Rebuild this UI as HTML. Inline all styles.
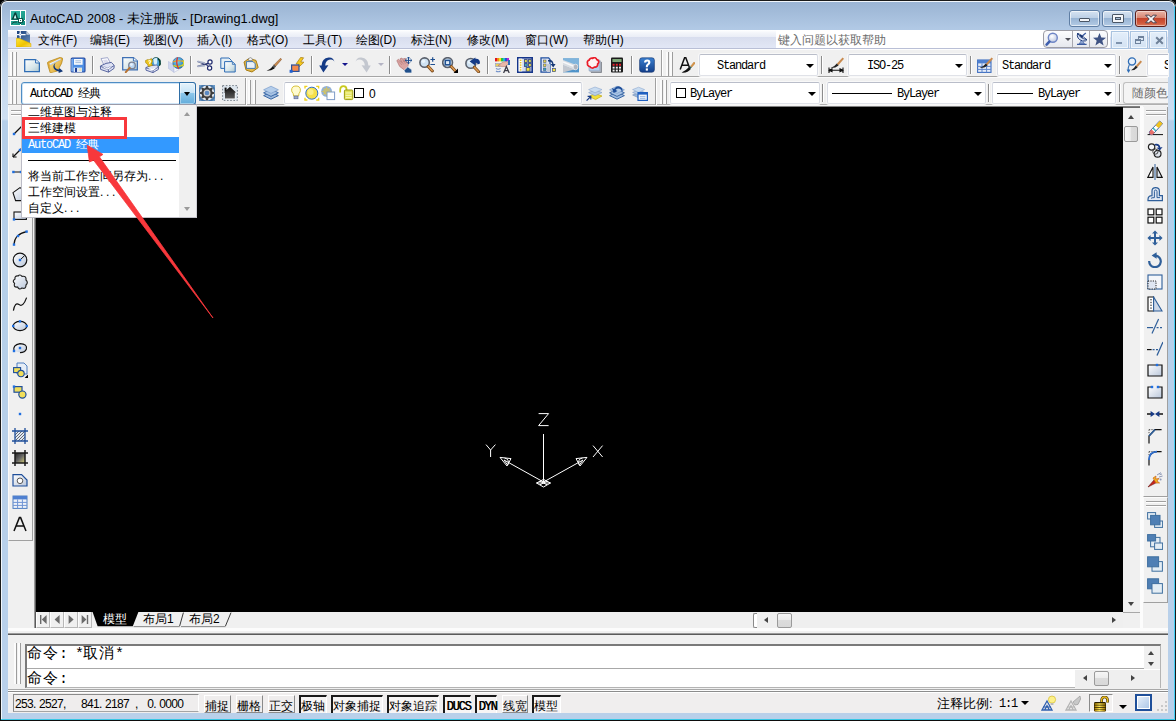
<!DOCTYPE html>
<html lang="zh">
<head>
<meta charset="utf-8">
<title>AutoCAD 2008</title>
<style>
*{box-sizing:border-box;margin:0;padding:0}
html,body{width:1176px;height:721px;overflow:hidden;background:#000}
body{font-family:"Liberation Sans",sans-serif;font-size:12px;color:#000;position:relative}
#win{position:absolute;left:0;top:0;width:1176px;height:721px;overflow:hidden;border-radius:7px 7px 0 0;
 background:linear-gradient(#9ab4d4 0,#a1bad8 10px,#b1c9e5 29px,#c3d7ee 70px,#cfdff1 119px,#b5cfea 121px,#b7d0ea 400px,#b9d0ea 100%)}
#win div,#win span,#win svg,#win i{position:absolute;display:block}
#win span{white-space:nowrap;line-height:16px}
.mn{font-size:12px;top:32px}
.ss{font-family:"Liberation Mono",monospace;font-size:12px;letter-spacing:-1.2px}
.cj{font-family:"Liberation Sans",sans-serif;font-size:12px}
.combo{background:#fff;border:1px solid #d9dce4;border-top-color:#b9bdc9;border-bottom-color:#e0e2e8;border-radius:2px;box-shadow:0 0 0 1px #f8f8f8}
.arr{width:0;height:0;border-left:4px solid transparent;border-right:4px solid transparent;border-top:4px solid #000}
.vsep{width:1px;background:#8c8c8c}
.grip{width:3px;border-left:2px solid #fbfbfb;border-right:1px solid #9c9c9c}
.dt{font-weight:normal;letter-spacing:2.7px}
.cm{font-size:15px;line-height:18px;letter-spacing:1px}
.hw{font-weight:normal;font-family:"Liberation Mono",monospace;letter-spacing:-1px}
.dg{font-weight:normal;letter-spacing:-.67px}
.pn{font-weight:normal;letter-spacing:2.67px}
</style>
</head>
<body>
<div id="win">
<div style="left:0px;top:0px;width:1176px;height:721px;border-radius:7px 7px 0 0;box-shadow:inset 0 0 0 1px #1a1a1a,inset 0 0 0 2px #f1f6fb"></div>
<div style="left:1px;top:719px;width:1174px;height:1px;background:#38c6e4"></div>
<div style="left:1174px;top:6px;width:1px;height:714px;background:#44d0f6"></div>
<div style="left:0px;top:720px;width:1176px;height:1px;background:#0c0c0c"></div>
<svg style="left:10px;top:10px;" width="16" height="16" viewBox="0 0 16 16"><defs><linearGradient id="ga" x1="0" y1="0" x2="1" y2="1"><stop offset="0" stop-color="#34bca8"/><stop offset="1" stop-color="#128a7a"/></linearGradient></defs><rect x="0" y="0" width="16" height="16" fill="#fff"/><rect x="1" y="1" width="14" height="14" fill="url(#ga)"/><path d="M2 9 L4.6 2.4 L6 2.2 L8.2 9 L6.6 9 L5.2 4.4 L3.6 9 Z" fill="#0b3f38"/><path d="M3.8 8.6 L5.2 4.8 L6.4 8.6 Z" fill="#e8f8f5"/><path d="M1.6 9.2 H8.6" stroke="#0b3f38" stroke-width=".9"/><path d="M10.5 1 V15 M1 10.5 H15" stroke="#fff" stroke-width="1" shape-rendering="crispEdges"/><rect x="8.5" y="8.5" width="4" height="4" fill="#fff" stroke="#0e5a50" stroke-width="1" shape-rendering="crispEdges"/><rect x="10" y="10" width="1" height="1" fill="#0e5a50"/><path d="M1.6 13.8 L4 12.2 L7 12" stroke="#0b3f38" stroke-width=".9" fill="none"/><rect x="10" y="13" width="1" height="1" fill="#0b3f38"/><rect x="13" y="10" width="1" height="1" fill="#0b3f38"/></svg>
<span style="left:30px;top:10px;font-size:12.8px;line-height:18px">AutoCAD 2008 - 未注册版 - [Drawing1.dwg]</span>
<div style="left:1069px;top:10px;width:31px;height:17px;background:linear-gradient(#d6e3f1 0,#bdd0e6 45%,#98b4d4 50%,#b3cbe5 100%);border:1px solid #5f7ea4;border-radius:3px;box-shadow:inset 0 0 0 1px rgba(255,255,255,.62)"><div style="left:9px;top:7px;width:11px;height:4px;background:#f4f6f9;border:1px solid #4a5666;border-radius:1px"></div></div><div style="left:1102px;top:10px;width:31px;height:17px;background:linear-gradient(#d6e3f1 0,#bdd0e6 45%,#98b4d4 50%,#b3cbe5 100%);border:1px solid #5f7ea4;border-radius:3px;box-shadow:inset 0 0 0 1px rgba(255,255,255,.62)"><div style="left:9px;top:3px;width:12px;height:9px;background:#f4f6f9;border:1px solid #4a5666;border-radius:1px"></div><div style="left:12px;top:6px;width:6px;height:3px;background:#a9bfd9;border:1px solid #4a5666"></div></div><div style="left:1135px;top:10px;width:32px;height:17px;background:linear-gradient(#e9b6a8 0,#d98774 45%,#c4452c 50%,#d0583c 80%,#dd7a5c 100%);border:1px solid #5b1e1a;border-radius:3px;box-shadow:inset 0 0 0 1px rgba(255,255,255,.45)"><svg style="left:8px;top:2.5px;" width="14" height="10" viewBox="0 0 14 10"><path d="M1.6 1.2 L4.8 1.2 L7 3.2 L9.2 1.2 L12.4 1.2 L8.8 5 L12.4 8.8 L9.2 8.8 L7 6.8 L4.8 8.8 L1.6 8.8 L5.2 5 Z" fill="#f6f6f8" stroke="#4a4450" stroke-width="1" stroke-linejoin="round"/></svg></div>
<div style="left:8px;top:30px;width:1160px;height:19px;background:linear-gradient(#ffffff 0,#f3f5fa 3px,#eaedf6 7px,#d8ddee 7px,#dde2f1 12px,#e2e7f6 18px,#b9bfd6 18px,#b9bfd6 19px)"></div>
<svg style="left:16px;top:31px;" width="16" height="16" viewBox="0 0 16 16"><defs><linearGradient id="gd" x1="0" y1="0" x2="1" y2="1"><stop offset="0" stop-color="#173f7c"/><stop offset="1" stop-color="#6a8db8"/></linearGradient><linearGradient id="gy" x1="0" y1="0" x2="1" y2="1"><stop offset="0" stop-color="#ffe63a"/><stop offset=".6" stop-color="#f0c400"/><stop offset="1" stop-color="#f8dc6a"/></linearGradient></defs><path d="M1 0 H10.4 L14 3.8 V13 H1 Z" fill="url(#gd)"/><path d="M10.4 0 L14 3.8 H10.4 Z" fill="#c4ccd8"/><path d="M1 3.6 H9.6 M4.2 0 V7.6" stroke="#fff" stroke-width="1.1"/><circle cx="4.2" cy="3.6" r="1.3" fill="#fff"/><circle cx="4.2" cy="3.6" r=".5" fill="#3f6fae"/><path d="M.2 7.3 H3 L15 12.6 V16 H.2 Z" fill="url(#gy)" stroke="#d8a800" stroke-width=".5"/></svg>
<span class="mn" style="left:38px;top:32px;">文件(F)</span>
<span class="mn" style="left:90px;top:32px;">编辑(E)</span>
<span class="mn" style="left:143px;top:32px;">视图(V)</span>
<span class="mn" style="left:197px;top:32px;">插入(I)</span>
<span class="mn" style="left:247px;top:32px;">格式(O)</span>
<span class="mn" style="left:303px;top:32px;">工具(T)</span>
<span class="mn" style="left:355.5px;top:32px;">绘图(D)</span>
<span class="mn" style="left:411px;top:32px;">标注(N)</span>
<span class="mn" style="left:467px;top:32px;">修改(M)</span>
<span class="mn" style="left:525px;top:32px;">窗口(W)</span>
<span class="mn" style="left:583px;top:32px;">帮助(H)</span>
<div style="left:776px;top:30px;width:334px;height:18px;background:#fff"></div>
<span style="left:778px;top:32px;font-size:12px;color:#6c6c6c">键入问题以获取帮助</span>
<div style="left:1043px;top:30px;width:65px;height:18px;background:linear-gradient(#fdfdfe,#f1f2f6 50%,#e6e8ee);border:1px solid #9c9ca4;border-radius:4px"></div><div style="left:1072px;top:31px;width:1px;height:16px;background:#a8a8b0"></div><div style="left:1089px;top:31px;width:1px;height:16px;background:#a8a8b0"></div><svg style="left:1044px;top:32px;" width="16" height="15" viewBox="0 0 16 15"><defs><radialGradient id="gm" cx=".4" cy=".35" r=".7"><stop offset="0" stop-color="#fff"/><stop offset="1" stop-color="#b9c4e0"/></radialGradient></defs><circle cx="8.8" cy="5.8" r="4.5" fill="url(#gm)" stroke="#6f86c6" stroke-width="1.4"/><path d="M5.4 9.6 L2.6 12.6" stroke="#3f5fae" stroke-width="2.6" stroke-linecap="round"/></svg><div style="left:1065px;top:38px;width:0px;height:0px;border-left:3px solid transparent;border-right:3px solid transparent;border-top:3px solid #505058"></div><svg style="left:1075px;top:32px;" width="14" height="14" viewBox="0 0 14 14"><path d="M2.6 1 Q1 7 7.6 9 Q11.6 9.4 12 7.6 Q5 6.6 2.6 1 Z" fill="#dfe6f6" stroke="#24407e" stroke-width="1"/><path d="M3 1.4 Q6 2.4 11.6 7.4" stroke="#24407e" stroke-width=".8" fill="none"/><path d="M6.2 5 L10.8 1" stroke="#3a5aa0" stroke-width="1.3"/><path d="M4.6 3.6 Q6.6 3 7.6 5.6" fill="none" stroke="#16306a" stroke-width="1.6"/><path d="M6 9 L4 12 H9.6 L7.6 9" fill="#8fa4d0" stroke="#3a5aa0" stroke-width=".6"/><path d="M2 12.4 H11.6" stroke="#3a5aa0" stroke-width="1.2"/></svg><svg style="left:1093px;top:33px;" width="14" height="13" viewBox="0 0 14 13"><path d="M6.5 0 L8.3 4.6 L13 4.8 L9.3 7.8 L10.6 12.4 L6.5 9.8 L2.4 12.4 L3.7 7.8 L0 4.8 L4.7 4.6 Z" fill="#3f5384"/></svg>
<div style="left:1111px;top:31px;width:18px;height:18px;background:linear-gradient(#e3eefa,#d3e2f3);border:1px solid #a9c3e0;box-shadow:inset 0 0 0 1px #eef5fc"><div style="left:4px;top:10px;width:6px;height:2px;background:#7f93ad"></div></div><div style="left:1130px;top:31px;width:18px;height:18px;background:linear-gradient(#e3eefa,#d3e2f3);border:1px solid #a9c3e0;box-shadow:inset 0 0 0 1px #eef5fc"><div style="left:7px;top:4px;width:6px;height:5px;border:1px solid #6f839d;border-top-width:2px"></div><div style="left:4px;top:7px;width:6px;height:5px;border:1px solid #6f839d;border-top-width:2px;background:#dbe8f6"></div></div><div style="left:1149px;top:31px;width:18px;height:18px;background:linear-gradient(#e3eefa,#d3e2f3);border:1px solid #a9c3e0;box-shadow:inset 0 0 0 1px #eef5fc"><svg style="left:4.5px;top:4px;" width="9" height="9" viewBox="0 0 9 9"><path d="M1.2 1.2 L7.8 7.8 M7.8 1.2 L1.2 7.8" stroke="#6f8198" stroke-width="2"/></svg></div>
<div style="left:8px;top:49px;width:1160px;height:58px;background:#f0f0f0"></div>
<div style="left:8px;top:76px;width:1160px;height:1px;background:#a5a5a5"></div>
<div style="left:8px;top:77px;width:1160px;height:1px;background:#fbfbfb"></div>
<div style="left:8px;top:104px;width:1160px;height:1px;background:#b0b0b0"></div>
<div style="left:8px;top:105px;width:1160px;height:1px;background:#f4f4f4"></div>
<div style="left:8px;top:49px;width:1160px;height:1px;background:#fdfdfd"></div><div class="grip" style="left:10px;top:52px;width:3px;height:24px;"></div><div class="grip" style="left:14px;top:52px;width:3px;height:24px;"></div><svg style="left:24px;top:57px;" width="16" height="16" viewBox="0 0 16 16"><defs><linearGradient id="gp" x1="0" y1="0" x2="1" y2="1"><stop offset="0" stop-color="#fff"/><stop offset=".6" stop-color="#d8e6ea"/><stop offset="1" stop-color="#a9c4cf"/></linearGradient></defs><path d="M.7 2.6 H11.6 L15.4 6 V14.6 H.7 Z" fill="url(#gp)" stroke="#2f6db5" stroke-width="1.3"/><path d="M11.6 2.6 V6 H15.4" fill="#f4f8fb" stroke="#2f6db5" stroke-width="1"/></svg><svg style="left:47px;top:57px;" width="16" height="16" viewBox="0 0 16 16"><defs><linearGradient id="gf" x1="0" y1="0" x2="1" y2="1"><stop offset="0" stop-color="#f8e08a"/><stop offset="1" stop-color="#dca028"/></linearGradient></defs><path d="M.4 5.6 L2.6 4.2 L13.4 .3 L15.8 1.4 L14.6 6.4 L10.4 14 L3.2 15.8 L1.4 10 Z" fill="#e4b040" stroke="#b08214" stroke-width=".7"/><path d="M2.4 6.4 L13.2 1.4 L14.2 2.4 L3.2 8.4 Z" fill="#eef4fb"/><path d="M3 8 L14 2.4" stroke="#9ab4d8" stroke-width=".7"/><path d="M3 8.6 L14.6 2.8 L10.4 13.8 L3.6 15.4 Z" fill="url(#gf)"/><path d="M8.6 6 Q6.6 8 8 10.4 Q9.4 12.4 12 12.6 L12.4 11 L16 14.2 L11.6 16 L11.8 14.4 Q8 14 6.6 11 Q5.6 8 8.6 6 Z" fill="#123878"/></svg><svg style="left:70px;top:57px;" width="16" height="16" viewBox="0 0 16 16"><rect x="1.2" y="1" width="13.8" height="14" rx="1" fill="#4f8fe4" stroke="#27489c" stroke-width="1.1"/><path d="M2 2 V14.4" stroke="#9cc4f4" stroke-width="1"/><rect x="4" y="2" width="8.6" height="5.8" fill="#f6f9fc"/><path d="M5.4 3.8 H11 M5.4 5.6 H11" stroke="#9fb8d8" stroke-width=".9"/><rect x="3.6" y="10.6" width="8.4" height="4.4" fill="#dfe8f2"/><rect x="5" y="11" width="2" height="4" fill="#1f3f96"/><rect x="9" y="11" width="2.4" height="3" fill="#e8e4c0"/></svg><svg style="left:99px;top:57px;" width="16" height="16" viewBox="0 0 16 16"><path d="M2 1.6 L8.6 .6 L11.4 6 L5 8 Z" fill="#fbfbfe" stroke="#8e96c0" stroke-width=".8"/><path d="M4 3 L8 2.4 L9.6 5.4 L5.6 6.6 Z" fill="#dcdcec"/><path d="M1.4 9 L7 6.4 L12.4 5.4 L15.2 8.4 L15 11.4 L9.6 15.2 L1.6 12.4 Z" fill="#dfe3f4" stroke="#4a5896" stroke-width=".9"/><path d="M1.6 9.4 L9.4 12.2 L15 8.6 M9.4 12.2 V15" stroke="#4a5896" stroke-width=".9" fill="none"/><path d="M3.6 10.8 L9 12.8 L12.6 10.6 L10.6 9.8 L8.8 11 L5.4 9.8 Z" fill="#fff" stroke="#6a76a8" stroke-width=".5"/></svg><svg style="left:122px;top:57px;" width="16" height="16" viewBox="0 0 16 16"><defs><linearGradient id="gp" x1="0" y1="0" x2="1" y2="1"><stop offset="0" stop-color="#fff"/><stop offset=".6" stop-color="#d8e6ea"/><stop offset="1" stop-color="#a9c4cf"/></linearGradient></defs><path d="M.7 .7 H11.4 L15.4 4 V12.8 H.7 Z" fill="url(#gp)" stroke="#3f70b4" stroke-width="1.3"/><path d="M11.4 .7 V4 H15.4" fill="#f4f8fb" stroke="#3f70b4" stroke-width="1"/><circle cx="10" cy="8.4" r="3.3" fill="#b9d6f2" stroke="#7c8294" stroke-width="1.3"/><circle cx="9.4" cy="7.6" r="1.4" fill="#e8f2fc"/><path d="M7.6 10.8 L3.8 15.2" stroke="#b87434" stroke-width="2" stroke-linecap="round"/></svg><svg style="left:145px;top:57px;" width="16" height="16" viewBox="0 0 16 16"><circle cx="11" cy="5.4" r="4.8" fill="#4fa4dc" stroke="#1a4a3a" stroke-width=".8"/><path d="M8.4 2 Q10.6 .8 12 1.2 Q13 5 11 9.6 Q8.6 8 8.4 2 Z" fill="#d8f0f8"/><path d="M13 1.6 Q16 4.6 14.4 8.6" stroke="#0f3f2a" stroke-width="1.4" fill="none"/><path d="M.8 10.6 L5.6 8.6 L11.4 8 L13.6 10 L13.4 12.4 L8 15.6 L1 13.2 Z" fill="#dfe3f4" stroke="#4a5896" stroke-width=".9"/><path d="M1 10.8 L8 13.2 L13.4 10.2 M8 13.2 V15.4" stroke="#4a5896" stroke-width=".8" fill="none"/><path d="M3.4 12 L7.6 13.4 L10.8 11.6 L9.4 11 L7.6 12 L5 11.2 Z" fill="#fff"/><path d="M.4 3.6 L3 2.4 L4 3 L6.4 1.4 L7.6 4 L6.6 6.4 L7.4 8.4 L3.4 9.6 L2.4 7 L.8 6 Z" fill="#ecc41c" stroke="#a8860a" stroke-width=".6"/><path d="M3.4 4.4 Q4.6 3 5.6 4.2 Q5.8 5.4 4.6 5.8 L4.8 7" stroke="#fff8d0" stroke-width="1.1" fill="none"/></svg><svg style="left:168px;top:57px;" width="16" height="16" viewBox="0 0 16 16"><path d="M.4 4.4 L6 8 V15.4 L.4 11.4 Z" fill="#cfd6ee" stroke="#b0b8d8" stroke-width=".5"/><path d="M6 8 L11 6 V12.6 L6 15.4 Z" fill="#f2f4fb" stroke="#b0b8d8" stroke-width=".5"/><defs><radialGradient id="gg" cx=".4" cy=".35" r=".7"><stop offset="0" stop-color="#7fd0ec"/><stop offset="1" stop-color="#1f78b8"/></radialGradient></defs><circle cx="10.4" cy="6" r="5.6" fill="url(#gg)" stroke="#1d5aa0" stroke-width=".6"/><path d="M5 5 Q10 2.6 15.6 4.6" stroke="#f0a020" stroke-width="1.1" fill="none"/><path d="M5.4 8.4 Q10.6 11 15.6 7.6" stroke="#d8d020" stroke-width="1.2" fill="none"/><path d="M15 3 Q16.4 6 14.6 9.6" stroke="#e8e020" stroke-width="1" fill="none"/><path d="M9.6 .6 Q7.4 6 10.6 11.6" stroke="#e0342a" stroke-width="1.3" fill="none"/></svg><svg style="left:197px;top:57px;" width="16" height="16" viewBox="0 0 16 16"><path d="M.6 4.4 L11 8.6 M.6 9.4 L11 6.4" stroke="#2a3570" stroke-width="1.1"/><path d="M.6 4.4 L8 6 M.6 9.4 L8 8.6" stroke="#a8b0c8" stroke-width="1.6"/><circle cx="13" cy="5" r="2.1" fill="#fff" stroke="#1f2a6e" stroke-width="1.2"/><circle cx="12.6" cy="11" r="2.1" fill="#fff" stroke="#1f2a6e" stroke-width="1.2"/></svg><svg style="left:220px;top:57px;" width="16" height="16" viewBox="0 0 16 16"><defs><linearGradient id="gp" x1="0" y1="0" x2="1" y2="1"><stop offset="0" stop-color="#fff"/><stop offset=".6" stop-color="#d8e6ea"/><stop offset="1" stop-color="#a9c4cf"/></linearGradient></defs><path d="M.8 1 H9 L11.4 3.4 V11.4 H.8 Z" fill="#e4eef4" stroke="#2f6db5" stroke-width="1"/><path d="M4.6 4.6 H12.4 L15.2 7.4 V15 H4.6 Z" fill="url(#gp)" stroke="#2f6db5" stroke-width="1"/><path d="M12.4 4.6 V7.4 H15.2" fill="none" stroke="#2f6db5" stroke-width=".8"/></svg><svg style="left:243px;top:57px;" width="16" height="16" viewBox="0 0 16 16"><path d="M1 5 L6 1.4 L13 3.4 L15.2 10.6 L9 15 L3 13 Z" fill="#e3b94a" stroke="#a87d14" stroke-width="1"/><path d="M5.4 1.6 L7.6 .6 L9.6 2 L9 3.6 H5.6 Z" fill="#f2f2f2" stroke="#7a7a7a" stroke-width=".7"/><path d="M3.4 4.6 H10 L12.2 6.8 V11.4 H3.4 Z" fill="#eaf1f6" stroke="#2f6db5" stroke-width=".9"/></svg><svg style="left:266px;top:57px;" width="16" height="16" viewBox="0 0 16 16"><path d="M14.6 1.2 L15.6 2.4 L9.4 9.6 L7.6 8.2 Z" fill="#c98a4e" stroke="#7a4a22" stroke-width=".5"/><path d="M8 7.6 L10 9.6 L8 11.6 L6 10 Z" fill="#555"/><path d="M6.6 9.4 L8.6 11.4 Q5 14 .6 13.8 Q4 12.6 6.6 9.4 Z" fill="#111"/></svg><svg style="left:289px;top:57px;" width="16" height="16" viewBox="0 0 16 16"><path d="M11.6 .4 L14.6 .8 L11.8 5 L15 5.2 L7.4 12.4 L9.6 7.2 L7 7 Z" fill="#f4c81e" stroke="#a87d14" stroke-width=".7"/><rect x="2.6" y="8" width="7.4" height="6.4" fill="#f58a4c" stroke="#2a4f9a" stroke-width="1.2"/><rect x=".6" y="12.8" width="3" height="3" fill="#1f5fd0"/></svg><svg style="left:319px;top:57px;" width="16" height="16" viewBox="0 0 16 16"><path d="M15.6 5.4 Q14.4 1.6 10 2.8 Q6.6 4 6.2 8.4 L9.4 8.2 L4.4 15.6 L.2 8.4 L2.6 8.5 Q2.8 1.6 9.6 .6 Q14.6 .2 15.6 5.4 Z" fill="#143a86"/></svg><svg style="left:355px;top:57px;" width="16" height="16" viewBox="0 0 16 16"><g transform="translate(16 0) scale(-1 1)"><path d="M15.6 5.4 Q14.4 1.6 10 2.8 Q6.6 4 6.2 8.4 L9.4 8.2 L4.4 15.6 L.2 8.4 L2.6 8.5 Q2.8 1.6 9.6 .6 Q14.6 .2 15.6 5.4 Z" fill="#c3c7cf"/></g></svg><svg style="left:396px;top:57px;" width="16" height="16" viewBox="0 0 16 16"><path d="M.8 3.6 L2.6 2.2 L5.6 5.4 L4 1.8 L6 1 L8.2 5 L7.6 1.6 L9.6 1.4 L10.6 6 L11.6 4.8 L12.8 5.6 L11.6 10.4 L8.6 13.2 L3.6 9.4 Z" fill="#dba5a2" stroke="#a86a6a" stroke-width=".6" stroke-linejoin="round"/><path d="M2.6 4 L6 8 M5 3.4 L7.6 7.4 M8 3 L9.4 7" stroke="#b87c7c" stroke-width=".6"/><path d="M8 13.4 L11.8 9.8 L15.8 12.8 V16 H9.4 Z" fill="#1f4f8a" stroke="#f4f6fa" stroke-width=".7"/><path d="M12.5 0 V6.8 M9.1 3.4 H15.9" stroke="#1f4f90" stroke-width="1"/><path d="M11.2 1.4 L12.5 0 L13.8 1.4 M11.2 5.4 L12.5 6.8 L13.8 5.4 M10.5 2.1 L9.1 3.4 L10.5 4.7 M14.5 2.1 L15.9 3.4 L14.5 4.7" stroke="#1f4f90" stroke-width="1" fill="none"/></svg><svg style="left:419px;top:57px;" width="16" height="16" viewBox="0 0 16 16"><circle cx="5.6" cy="5.6" r="4.7" fill="#cfe2f2" stroke="#5a606c" stroke-width="1.6"/><circle cx="4.3999999999999995" cy="4.199999999999999" r="1.8" fill="#eaf4fb"/><path d="M9.2 9.399999999999999 L13.399999999999999 14.0" stroke="#7a4a1c" stroke-width="3" stroke-linecap="round"/><path d="M9.399999999999999 9.6 L13.2 13.799999999999999" stroke="#dc9a52" stroke-width="1.5" stroke-linecap="round"/><path d="M11.4 2.5 H16 M13.7 .2 V4.8 M11.4 7.5 H16" stroke="#1f4f90" stroke-width="1.2"/></svg><svg style="left:442px;top:57px;" width="16" height="16" viewBox="0 0 16 16"><circle cx="5.6" cy="5.6" r="4.9" fill="#cfe2f2" stroke="#5a606c" stroke-width="1.6"/><circle cx="4.3999999999999995" cy="4.199999999999999" r="1.8" fill="#eaf4fb"/><path d="M9.2 9.399999999999999 L13.399999999999999 14.0" stroke="#7a4a1c" stroke-width="3" stroke-linecap="round"/><path d="M9.399999999999999 9.6 L13.2 13.799999999999999" stroke="#dc9a52" stroke-width="1.5" stroke-linecap="round"/><rect x="3.3" y="3.4" width="4.6" height="4.4" fill="#dfeaf6" stroke="#1f4f90" stroke-width="1.5"/><path d="M16 11.6 V16 H11.6 Z" fill="#000"/></svg><svg style="left:465px;top:57px;" width="16" height="16" viewBox="0 0 16 16"><circle cx="5.8" cy="6.4" r="4.9" fill="#cfe2f2" stroke="#5a606c" stroke-width="1.6"/><circle cx="4.6" cy="5.0" r="1.8" fill="#eaf4fb"/><path d="M9.4 10.2 L13.6 14.8" stroke="#7a4a1c" stroke-width="3" stroke-linecap="round"/><path d="M9.6 10.4 L13.399999999999999 14.6" stroke="#dc9a52" stroke-width="1.5" stroke-linecap="round"/><path d="M15 6.4 Q15 1.2 10.4 1.8 L10.4 .4 L4.6 4.6 L10.4 8.6 L10.4 5.8 Q12.6 5.4 12.6 7.6 Z" fill="#143a86"/></svg><svg style="left:494px;top:57px;" width="16" height="16" viewBox="0 0 16 16"><rect x="1" y="1" width="2" height="3.4" fill="#e0141c"/><rect x="3" y="1" width="2" height="3.4" fill="#f08a1a"/><rect x="5" y="1" width="2" height="3.4" fill="#f4e61e"/><rect x="7" y="1" width="2" height="3.4" fill="#2fbf3a"/><rect x="9" y="1" width="2" height="3.4" fill="#1fb9d6"/><rect x="11" y="1" width="2" height="3.4" fill="#2a4fd6"/><rect x="13" y="1" width="2" height="3.4" fill="#b02ad6"/><rect x="1.6" y="6.6" width="4.6" height="3" fill="#e6cf5a" stroke="#8d9abf" stroke-width=".6"/><path d="M4 8.6 L9 5 L13 4.4 L14.6 6.4 L12 9.4 L8 9.6 Z" fill="#e9b8a8" stroke="#a86c60" stroke-width=".5"/><rect x="14" y="3" width="2" height="5" fill="#2f6db5"/><path d="M2 11.4 Q4 13 6.6 11.4 M2 14 Q4 15.6 6.6 14" stroke="#6f8fc8" stroke-width="1.1" fill="none"/><path d="M9.6 16 L12.4 9.6 L15.2 16 M10.6 13.6 H14.2" stroke="#3a3a46" stroke-width="1.3" fill="none"/></svg><svg style="left:517px;top:57px;" width="16" height="16" viewBox="0 0 16 16"><rect x=".8" y=".8" width="14.4" height="14.4" fill="#d4dcee" stroke="#16368a" stroke-width="1.6"/><rect x="1.6" y="1.6" width="3.6" height="12.8" fill="#fdfdfd"/><rect x="2.8" y="2.6" width="1.6" height="1.4" fill="#e8c51e"/><rect x="2.8" y="5" width="1.6" height="1.4" fill="#e8c51e"/><rect x="2.8" y="7.4" width="1.6" height="1.4" fill="#e8c51e"/><rect x="2.8" y="9.8" width="1.6" height="1.4" fill="#e8c51e"/><rect x="2.8" y="12.2" width="1.6" height="1.4" fill="#e8c51e"/><rect x="7.4" y="2.6" width="2.8" height="2.8" fill="#e8dc4a" stroke="#2a3c7a" stroke-width=".8"/><rect x="11.4" y="2.6" width="2.8" height="2.8" fill="#cfd65a" stroke="#2a3c7a" stroke-width=".8"/><rect x="7.4" y="6.6" width="2.8" height="2.8" fill="#3aa7b8" stroke="#2a3c7a" stroke-width=".8"/><rect x="11.4" y="6.6" width="2.8" height="2.8" fill="#e8dc4a" stroke="#2a3c7a" stroke-width=".8"/><rect x="9.2" y="10.6" width="3.8" height="3.6" fill="#f6e63a" stroke="#2a3c7a" stroke-width=".8"/></svg><svg style="left:540px;top:57px;" width="16" height="16" viewBox="0 0 16 16"><path d="M1 .8 H8.6 L10 2.4 V15.2 H1 Z" fill="#dfe6f2" stroke="#1f4fa0" stroke-width="1.3"/><rect x="7" y="7" width="3" height="8" fill="#c4cad6"/><rect x="3.4" y="3" width="2.6" height="2.6" fill="#e8d64a" stroke="#3a4a7a" stroke-width=".5"/><rect x="3.4" y="7" width="2.6" height="2.6" fill="#e8d64a" stroke="#3a4a7a" stroke-width=".5"/><rect x="3.4" y="11" width="2.6" height="2.6" fill="#3aa7b8" stroke="#3a4a7a" stroke-width=".5"/><path d="M8 3 Q12.6 2 13.6 7 L15.6 7 L13.2 10.6 L10.6 7 L12.2 7 Q11.6 4.4 8 4.6 Z" fill="#173a78"/><rect x="12.6" y="11.6" width="3" height="3" fill="#f4e23a" stroke="#3a4a7a" stroke-width=".7"/></svg><svg style="left:563px;top:57px;" width="16" height="16" viewBox="0 0 16 16"><rect x="0" y="1.4" width="16" height="14" fill="#4f93c9"/><path d="M0 1.4 L16 1.4 L16 9 L0 4 Z" fill="#7fb4dc"/><path d="M0 3 L12 7.4 Q15.6 9 13 12 L11.4 13 L0 8.4 Z" fill="#d9dde2"/><path d="M0 5 L12.4 10" stroke="#f7f8fa" stroke-width="1.6"/><path d="M0 8 L11 12.6 L0 15.4 Z" fill="#c2c7cf"/><ellipse cx="12.6" cy="10" rx="2.4" ry="2.8" fill="#aeb4be" stroke="#e8eaee" stroke-width=".8"/></svg><svg style="left:586px;top:57px;" width="16" height="16" viewBox="0 0 16 16"><path d="M5 5 H15.8 V15.8 H5 Z" fill="#70757e"/><path d="M4 4 H14.8 V14.8 H4 Z" fill="#c9ced6" stroke="#9aa0aa" stroke-width=".4"/><path d="M3 3 H13.8 V13.8 H3 Z" fill="#b4cfea" stroke="#7f93b2" stroke-width=".5"/><path d="M3.2 3.2 A2.3 2.3 0 0 1 6.6 1.4 A2.5 2.5 0 0 1 10.8 2.6 A2.4 2.4 0 0 1 11.6 7 A2.5 2.5 0 0 1 8.4 10 A2.6 2.6 0 0 1 4 9.6 A2.5 2.5 0 0 1 1.6 6.4 A2.2 2.2 0 0 1 3.2 3.2 Z" fill="#fdf2f2" stroke="#ea1c28" stroke-width="1.7" stroke-linejoin="round"/></svg><svg style="left:609px;top:57px;" width="16" height="16" viewBox="0 0 16 16"><rect x="2" y=".6" width="12" height="15" rx="1" fill="#1b1b1b"/><rect x="3.4" y="2" width="9.2" height="3" fill="#7fa878"/><rect x="3.6" y="6.8" width="2" height="1.9" fill="#e8202a"/><rect x="6.800000000000001" y="6.8" width="2" height="1.9" fill="#e8202a"/><rect x="10.0" y="6.8" width="2" height="1.9" fill="#e8202a"/><rect x="3.6" y="9.7" width="2" height="1.9" fill="#f4f4f4"/><rect x="6.800000000000001" y="9.7" width="2" height="1.9" fill="#f4f4f4"/><rect x="10.0" y="9.7" width="2" height="1.9" fill="#f4f4f4"/><rect x="3.6" y="12.6" width="2" height="1.9" fill="#f4f4f4"/><rect x="6.800000000000001" y="12.6" width="2" height="1.9" fill="#f4f4f4"/><rect x="10.0" y="12.6" width="2" height="1.9" fill="#f4f4f4"/></svg><svg style="left:639px;top:57px;" width="16" height="16" viewBox="0 0 16 16"><defs><linearGradient id="gh" x1="0" y1="0" x2="0" y2="1"><stop offset="0" stop-color="#3a7fd0"/><stop offset="1" stop-color="#133f8a"/></linearGradient></defs><rect x=".6" y=".8" width="14.8" height="14.4" rx="2.4" fill="url(#gh)" stroke="#0f2f6a" stroke-width=".6"/><path d="M5 5.6 Q5 2.6 8.2 2.6 Q11.4 2.6 11.4 5.4 Q11.4 7.2 9.6 8.2 Q8.8 8.8 8.8 10.2 H6.8 Q6.6 8 8 7 Q9.2 6.2 9.2 5.4 Q9.2 4.4 8.2 4.4 Q7.2 4.4 7.2 5.6 Z" fill="#fff"/><rect x="6.8" y="11.4" width="2.1" height="2.2" fill="#fff"/></svg><div class="vsep" style="left:92px;top:56px;width:1px;height:18px;"></div><div style="left:93px;top:56px;width:1px;height:18px;background:#fff"></div><div class="vsep" style="left:190px;top:56px;width:1px;height:18px;"></div><div style="left:191px;top:56px;width:1px;height:18px;background:#fff"></div><div class="vsep" style="left:311px;top:56px;width:1px;height:18px;"></div><div style="left:312px;top:56px;width:1px;height:18px;background:#fff"></div><div class="vsep" style="left:389px;top:56px;width:1px;height:18px;"></div><div style="left:390px;top:56px;width:1px;height:18px;background:#fff"></div><div class="vsep" style="left:487px;top:56px;width:1px;height:18px;"></div><div style="left:488px;top:56px;width:1px;height:18px;background:#fff"></div><div class="vsep" style="left:631px;top:56px;width:1px;height:18px;"></div><div style="left:632px;top:56px;width:1px;height:18px;background:#fff"></div><div style="left:342px;top:63px;width:0px;height:0px;border-left:3px solid transparent;border-right:3px solid transparent;border-top:3px solid #14148c"></div><div style="left:378px;top:63px;width:0px;height:0px;border-left:3px solid transparent;border-right:3px solid transparent;border-top:3px solid #b4b4c4"></div><div style="left:661px;top:50px;width:1px;height:26px;background:#a0a0a0"></div><div style="left:662px;top:50px;width:1px;height:26px;background:#fff"></div><div class="grip" style="left:666px;top:52px;width:3px;height:24px;"></div><div class="grip" style="left:670px;top:52px;width:3px;height:24px;"></div><svg style="left:679px;top:57px;" width="16" height="16" viewBox="0 0 16 16"><path d="M1.2 12.6 L5.6 .8 H6.8 L10.8 11.4 M3.2 8.3 H9.2" stroke="#111" stroke-width="1.5" fill="none"/><path d="M15 5 L16.2 6.2 L12.8 10.2 L11.6 9.2 Z" fill="#dc9a4c" stroke="#a86a24" stroke-width=".4"/><path d="M11.6 9.2 L12.8 10.2 L11.4 11.8 L10.2 10.8 Z" fill="#2a5a5a"/><path d="M9.8 10.2 L11.8 12 Q8.8 16.2 2.6 15.6 Q7 13.4 9.8 10.2 Z" fill="#111"/></svg><div class="combo" style="left:699px;top:54px;width:119px;height:22px;"><span class="ss" style="left:17px;top:3px;">Standard</span></div><div class="arr" style="left:806px;top:64px;width:0px;height:0px;"></div><div class="vsep" style="left:821px;top:56px;width:1px;height:18px;"></div><div style="left:822px;top:56px;width:1px;height:18px;background:#fff"></div><svg style="left:828px;top:57px;" width="16" height="16" viewBox="0 0 16 16"><path d="M14.6 .4 L16 1.8 L10.4 8.2 L8.8 6.8 Z" fill="#c98a4e"/><path d="M8.8 6.6 L10.6 8.4 Q7 11.4 2.6 11 Q6.6 9.8 8.8 6.6 Z" fill="#222"/><path d="M1 10.4 V16 M15 10.4 V16 M1 13.2 H15 M1 13.2 L4 11.8 V14.6 Z M15 13.2 L12 11.8 V14.6 Z" stroke="#111" stroke-width="1.1" fill="#111"/></svg><div class="combo" style="left:848px;top:54px;width:119px;height:22px;"><span class="ss" style="left:18px;top:3px;">ISO-25</span></div><div class="arr" style="left:955px;top:64px;width:0px;height:0px;"></div><div class="vsep" style="left:970px;top:56px;width:1px;height:18px;"></div><div style="left:971px;top:56px;width:1px;height:18px;background:#fff"></div><svg style="left:977px;top:57px;" width="16" height="16" viewBox="0 0 16 16"><rect x=".6" y="3" width="13.4" height="12.4" fill="#e6edf8" stroke="#3f6fc0" stroke-width="1.1"/><rect x=".6" y="3" width="13.4" height="3.4" fill="#4f80d0"/><path d="M.6 9.4 H14 M.6 12.4 H14 M5 6.4 V15.4 M9.6 6.4 V15.4" stroke="#5f86cc" stroke-width="1"/><path d="M14.6 .4 L16 1.8 L10.4 8.2 L8.8 6.8 Z" fill="#c98a4e"/><path d="M8.8 6.6 L10.6 8.4 Q7 11.4 2.6 11 Q6.6 9.8 8.8 6.6 Z" fill="#222"/></svg><div class="combo" style="left:997px;top:54px;width:119px;height:22px;"><span class="ss" style="left:4px;top:3px;">Standard</span></div><div class="arr" style="left:1104px;top:64px;width:0px;height:0px;"></div><div class="vsep" style="left:1119px;top:56px;width:1px;height:18px;"></div><div style="left:1120px;top:56px;width:1px;height:18px;background:#fff"></div><svg style="left:1126px;top:57px;" width="16" height="16" viewBox="0 0 16 16"><circle cx="6" cy="4.4" r="3.6" fill="#eaf2fb" stroke="#2f6db5" stroke-width="1.3"/><path d="M3.4 7.4 Q1.6 10.6 2.4 14.4" stroke="#2f6db5" stroke-width="1.1" fill="none"/><path d="M.6 12.6 L2.6 16 L4.4 12.6 Z" fill="#2f6db5"/><path d="M14.6 3.4 L16 4.8 L11.4 10.2 L9.8 8.8 Z" fill="#c98a4e"/><path d="M9.8 8.6 L11.6 10.4 Q8.6 13.6 5 13.2 Q8 12 9.8 8.6 Z" fill="#222"/></svg><div class="combo" style="left:1147px;top:54px;width:21px;height:22px;border-right:0;border-radius:2px 0 0 2px;overflow:hidden"><span class="ss" style="left:16px;top:3px;">S</span></div>
<div class="grip" style="left:10px;top:80px;width:3px;height:24px;"></div><div class="grip" style="left:14px;top:80px;width:3px;height:24px;"></div><div style="left:21px;top:82px;width:175px;height:23px;background:#fff;border:1px solid #4f8dc4;border-radius:3px;box-shadow:inset 0 0 0 1px #cfe4f6"></div><span class="ss" style="left:30px;top:86px;">AutoCAD 经典</span><div style="left:179px;top:82px;width:17px;height:23px;background:linear-gradient(#e6f3fb 0,#c8e4f6 45%,#8cc6ea 50%,#62acda 100%);border:1px solid #2f6ea6;border-radius:0 3px 3px 0;box-shadow:inset 0 0 0 1px rgba(255,255,255,.4)"></div><div style="left:184px;top:92px;width:0px;height:0px;border-left:3.5px solid transparent;border-right:3.5px solid transparent;border-top:4px solid #000"></div><svg style="left:199px;top:85px;" width="16" height="16" viewBox="0 0 16 16"><rect x="0" y="0" width="16" height="16" fill="#4878aa"/><circle cx="8" cy="8" r="7.4" fill="#dfe7f0"/><path d="M0 0 H3 L0 3 Z M16 0 H13 L16 3 Z M0 16 H3 L0 13 Z M16 16 H13 L16 13 Z" fill="#6a98c4"/><path d="M7 .8 H9 L9.4 2.8 L10.8 3.4 L12.6 2.4 L13.8 3.6 L12.8 5.4 L13.4 6.8 L15.2 7.2 V8.8 L13.4 9.2 L12.8 10.6 L13.8 12.4 L12.6 13.6 L10.8 12.6 L9.4 13.2 L9 15.2 H7 L6.6 13.2 L5.2 12.6 L3.4 13.6 L2.2 12.4 L3.2 10.6 L2.6 9.2 L.8 8.8 V7.2 L2.6 6.8 L3.2 5.4 L2.2 3.6 L3.4 2.4 L5.2 3.4 L6.6 2.8 Z" fill="#3e3e3e"/><circle cx="8" cy="8" r="3.5" fill="#cfcfcf"/><circle cx="8" cy="8" r="2.3" fill="#5a8ac4"/></svg><svg style="left:222px;top:85px;" width="16" height="16" viewBox="0 0 16 16"><defs><linearGradient id="gw" x1="0" y1="0" x2="0" y2="1"><stop offset="0" stop-color="#101010"/><stop offset="1" stop-color="#5a5a5a"/></linearGradient></defs><rect x=".6" y=".6" width="14.8" height="14.8" fill="#dde6ee" stroke="#5a6470" stroke-width=".8" stroke-dasharray="1.6 1.6"/><path d="M8.4 2 L15 8 H13.4 V14.2 H3.4 V8 H1.8 Z" fill="#fff"/><path d="M8 1.8 L14.2 7.6 H12.8 V13.6 H3 V7.6 H1.6 Z" fill="url(#gw)"/><rect x="2.6" y="2.6" width="2" height="3.6" fill="#151515"/></svg><div style="left:245px;top:78px;width:1px;height:27px;background:#a0a0a0"></div><div style="left:246px;top:78px;width:1px;height:27px;background:#fff"></div><div class="grip" style="left:248px;top:80px;width:3px;height:24px;"></div><div class="grip" style="left:253px;top:80px;width:3px;height:24px;"></div><svg style="left:263px;top:85px;" width="16" height="16" viewBox="0 0 16 16"><path d="M8 7.0 L15.4 10.6 L8 14.2 L.6 10.6 Z" fill="#9cb9de" stroke="#2f5f9f" stroke-width=".9"/><path d="M8 4.199999999999999 L15.4 7.8 L8 11.4 L.6 7.8 Z" fill="#a8c3e4" stroke="#2f5f9f" stroke-width=".9"/><path d="M8 1.2 L15.4 4.8 L8 8.4 L.6 4.8 Z" fill="#b4cdea" stroke="#7a9ccc" stroke-width=".7"/></svg><div class="combo" style="left:284px;top:82px;width:298px;height:22px;"><svg style="left:6px;top:1.5px;" width="64" height="16" viewBox="0 0 64 16"><path d="M5 1 Q9.4 1 9.4 5.2 Q9.4 7 8 8.6 L7.6 11 H2.6 L2.2 8.6 Q.6 7 .6 5.2 Q.6 1 5 1 Z" fill="#fffbd0" stroke="#d8c23a" stroke-width="1"/><rect x="3" y="11" width="4" height="2.8" fill="#9aa6c8" stroke="#56628c" stroke-width=".6"/><g transform="translate(14 0)"><path d="M0 3.6 V1.4 H2.4 M11.2 1.4 H13.6 V3.6 M13.6 12.8 V15 H11.2 M2.4 15 H0 V12.8" fill="none" stroke="#f0d21e" stroke-width="1.4"/><circle cx="6.8" cy="8.2" r="6" fill="#f6e04a" stroke="#2f6fc8" stroke-width="1"/><circle cx="5.6" cy="7" r="3" fill="#fbee86"/></g><g transform="translate(30 0)"><circle cx="5.6" cy="6.4" r="5.4" fill="#8fb0dc"/><circle cx="5.6" cy="6.4" r="2.6" fill="none" stroke="#d8c45a" stroke-width="1.1"/><path d="M5.6 1.4 V11.4 M.6 6.4 H10.6 M2 2.8 L9.2 10 M9.2 2.8 L2 10" stroke="#d8c45a" stroke-width=".8"/><rect x="6" y="7" width="7.6" height="7.6" fill="#fff" stroke="#7f9cc8" stroke-width="1"/></g><g transform="translate(48 0)"><path d="M1.2 7.4 V4.6 Q1.2 1.2 4.4 1.2 Q7.6 1.2 7.6 4.6 V6" fill="none" stroke="#c9c91e" stroke-width="1.7"/><rect x="5.4" y="5" width="8.4" height="9.6" rx="1" fill="#e3e35a" stroke="#9a9a14" stroke-width="1"/><path d="M6.6 8 H12.6 M6.6 10.4 H12.6 M6.6 12.6 H12.6" stroke="#f8f8b8" stroke-width="1"/></g></svg><div style="left:69px;top:5px;width:10px;height:10px;background:#fff;border:1px solid #000"></div><span style="left:84px;top:3px;font-size:12px">0</span></div><div class="arr" style="left:570px;top:92px;width:0px;height:0px;"></div><svg style="left:586px;top:85px;" width="16" height="16" viewBox="0 0 16 16"><path d="M9 8.4 L16 11 L9.6 14.6 L3 11.4 Z" fill="#f1de3a" stroke="#b89f00" stroke-width=".6"/><path d="M9 5 L16 7.6 L9 10.8 L2.6 7.6 Z" fill="#b8cde6" stroke="#7f9cc4" stroke-width=".6"/><path d="M9 2 L16 4.6 L9 7.8 L2.6 4.6 Z" fill="#c9dcf0" stroke="#8faad0" stroke-width=".6"/><path d="M.6 15.6 L4.6 11.6 M1.6 11.4 H4.8 V14.6" stroke="#173a86" stroke-width="1.2" fill="none"/></svg><svg style="left:609px;top:85px;" width="16" height="16" viewBox="0 0 16 16"><path d="M8 7.0 L15.4 10.6 L8 14.2 L.6 10.6 Z" fill="#9cb9de" stroke="#2f5f9f" stroke-width=".9"/><path d="M8 4.199999999999999 L15.4 7.8 L8 11.4 L.6 7.8 Z" fill="#a8c3e4" stroke="#2f5f9f" stroke-width=".9"/><path d="M8 1.2 L15.4 4.8 L8 8.4 L.6 4.8 Z" fill="#b4cdea" stroke="#7a9ccc" stroke-width=".7"/><path d="M4.6 8 L3 3 L5 4 Q8 -.4 12.4 2.4 Q14.4 4.6 13 7.4 Q12.6 3.6 9 3.4 Q7.4 3.6 6.6 5 L8.6 6 Z" fill="#1f4f9a"/></svg><svg style="left:632px;top:85px;" width="16" height="16" viewBox="0 0 16 16"><path d="M6.6 7.6 L12.6 10 L6.6 12.8 L.6 10 Z" fill="#9db8d8" stroke="#6f8fb8" stroke-width=".6"/><path d="M6.6 5 L12.6 7.4 L6.6 10.2 L.6 7.4 Z" fill="#b8cde6" stroke="#7f9cc4" stroke-width=".6"/><path d="M6.6 2.2 L12.6 4.6 L6.6 7.4 L.6 4.6 Z" fill="#c9dcf0" stroke="#8faad0" stroke-width=".6"/><rect x="6" y="7.6" width="9.4" height="7.8" fill="#eef3fa" stroke="#1f5fc0" stroke-width="1.2"/><rect x="6" y="7.6" width="9.4" height="2" fill="#1f5fc0"/><path d="M8 11.6 H13.4 M8 13.4 H13.4" stroke="#8fb0e0" stroke-width=".9"/></svg><div style="left:655px;top:78px;width:1px;height:27px;background:#a0a0a0"></div><div style="left:656px;top:78px;width:1px;height:27px;background:#fff"></div><div class="grip" style="left:660px;top:80px;width:3px;height:24px;"></div><div class="grip" style="left:664px;top:80px;width:3px;height:24px;"></div><div class="combo" style="left:670px;top:82px;width:150px;height:22px;"><div style="left:5px;top:5px;width:10px;height:10px;background:#fff;border:1px solid #000"></div><span class="ss" style="left:19px;top:3px;">ByLayer</span></div><div class="arr" style="left:808px;top:92px;width:0px;height:0px;"></div><div class="vsep" style="left:822px;top:84px;width:1px;height:18px;"></div><div style="left:823px;top:84px;width:1px;height:18px;background:#fff"></div><div class="combo" style="left:827px;top:82px;width:159px;height:22px;"><div style="left:4px;top:10px;width:60px;height:1px;background:#000"></div><span class="ss" style="left:69px;top:3px;">ByLayer</span></div><div class="arr" style="left:974px;top:92px;width:0px;height:0px;"></div><div class="vsep" style="left:988px;top:84px;width:1px;height:18px;"></div><div style="left:989px;top:84px;width:1px;height:18px;background:#fff"></div><div class="combo" style="left:992px;top:82px;width:124px;height:22px;"><div style="left:4px;top:10px;width:36px;height:1px;background:#000"></div><span class="ss" style="left:45px;top:3px;">ByLayer</span></div><div class="arr" style="left:1104px;top:92px;width:0px;height:0px;"></div><div class="vsep" style="left:1119px;top:84px;width:1px;height:18px;"></div><div style="left:1120px;top:84px;width:1px;height:18px;background:#fff"></div><div style="left:1123px;top:82px;width:45px;height:22px;background:#f4f4f4;border:1px solid #c0c0c0;border-right:0;border-radius:3px 0 0 3px"><span style="left:8px;top:1.5px;color:#6e6e6e;font-size:12px">随颜色</span></div>
<div style="left:8px;top:106px;width:1160px;height:528px;background:#f0f0f0"></div>
<div style="left:34px;top:106px;width:1108px;height:1px;background:#808080"></div>
<div style="left:34px;top:106px;width:1px;height:523px;background:#9a9a9a"></div>
<div style="left:35px;top:107px;width:1px;height:521px;background:#5a5a5a"></div>
<div style="left:35px;top:107px;width:1106px;height:1px;background:#3a3a3a"></div>
<div style="left:36px;top:107px;width:1087px;height:505px;background:#000"></div>
<div style="left:8px;top:107px;width:25px;height:434px;background:#f0f0f0;border-right:1px solid #a0a0a0;border-bottom:1px solid #a0a0a0;border-left:1px solid #fbfbfb"></div><div style="left:11px;top:110px;width:20px;height:2px;border-top:1px solid #a0a0a0;border-bottom:1px solid #fff"></div><div style="left:11px;top:114px;width:20px;height:2px;border-top:1px solid #a0a0a0;border-bottom:1px solid #fff"></div><svg style="left:12px;top:120px;" width="16" height="16" viewBox="0 0 16 16"><path d="M2 14 L14 2" stroke="#111" stroke-width="1.2"/><rect x="0.8" y="12.8" width="2.4" height="2.4" fill="#1f6fe0"/><rect x="12.8" y="0.8" width="2.4" height="2.4" fill="#1f6fe0"/></svg><svg style="left:12px;top:142px;" width="16" height="16" viewBox="0 0 16 16"><path d="M1 15 L15 1" stroke="#111" stroke-width="1.2"/><path d="M1 15 L1 11.4 M1 15 L4.6 15 M15 1 L11.4 1 M15 1 V4.6" stroke="#111" stroke-width="1.1"/><rect x="6.8" y="6.8" width="2.4" height="2.4" fill="#1f6fe0"/></svg><svg style="left:12px;top:164px;" width="16" height="16" viewBox="0 0 16 16"><path d="M1 8 H9 Q14 8 14 13" stroke="#111" stroke-width="1.2" fill="none"/><rect x="0.19999999999999996" y="6.8" width="2.4" height="2.4" fill="#1f6fe0"/><rect x="7.8" y="6.8" width="2.4" height="2.4" fill="#1f6fe0"/></svg><svg style="left:12px;top:186px;" width="16" height="16" viewBox="0 0 16 16"><defs><linearGradient id="g2" x1="0" y1="0" x2="1" y2="1"><stop offset="0" stop-color="#fff"/><stop offset="1" stop-color="#b9c6da"/></linearGradient></defs><path d="M8 1.6 L15 6.6 L12.4 14.6 H3.6 L1 6.6 Z" fill="url(#g2)" stroke="#111" stroke-width="1.1"/></svg><svg style="left:12px;top:208px;" width="16" height="16" viewBox="0 0 16 16"><defs><linearGradient id="g2" x1="0" y1="0" x2="1" y2="1"><stop offset="0" stop-color="#fff"/><stop offset="1" stop-color="#b9c6da"/></linearGradient></defs><rect x="2" y="4" width="12.4" height="7.4" fill="url(#g2)" stroke="#111" stroke-width="1.1"/><rect x="0.8" y="10.200000000000001" width="2.4" height="2.4" fill="#1f6fe0"/><rect x="13.200000000000001" y="2.8" width="2.4" height="2.4" fill="#1f6fe0"/></svg><svg style="left:12px;top:230px;" width="16" height="16" viewBox="0 0 16 16"><path d="M2 14.6 Q2.6 4 14.6 1.6" stroke="#111" stroke-width="1.2" fill="none"/><rect x="0.8" y="13.4" width="2.4" height="2.4" fill="#1f6fe0"/><rect x="4.8" y="4.8" width="2.4" height="2.4" fill="#1f6fe0"/><rect x="13.4" y="0.40000000000000013" width="2.4" height="2.4" fill="#1f6fe0"/></svg><svg style="left:12px;top:252px;" width="16" height="16" viewBox="0 0 16 16"><defs><linearGradient id="g2" x1="0" y1="0" x2="1" y2="1"><stop offset="0" stop-color="#fff"/><stop offset="1" stop-color="#b9c6da"/></linearGradient></defs><circle cx="8" cy="8" r="6.8" fill="url(#g2)" stroke="#111" stroke-width="1.2"/><path d="M8 8 L12.6 3.6" stroke="#111" stroke-width="1"/><rect x="6.8" y="6.8" width="2.4" height="2.4" fill="#1f6fe0"/></svg><svg style="left:12px;top:274px;" width="16" height="16" viewBox="0 0 16 16"><defs><linearGradient id="g2" x1="0" y1="0" x2="1" y2="1"><stop offset="0" stop-color="#fff"/><stop offset="1" stop-color="#b9c6da"/></linearGradient></defs><path d="M3 5 Q2.4 1.6 6 2 Q8 -.2 10 2.4 Q14.6 1.6 14 6 Q16.6 8.6 14 11 Q14 15.6 10 14 Q7 16.4 5.6 13 Q1 13.6 2.6 9.4 Q-.2 7 3 5 Z" fill="url(#g2)" stroke="#222" stroke-width="1.2"/></svg><svg style="left:12px;top:296px;" width="16" height="16" viewBox="0 0 16 16"><path d="M1.4 14.6 Q3 5.6 7 8.6 Q11 11.6 14.6 1.6" stroke="#111" stroke-width="1.2" fill="none"/></svg><svg style="left:12px;top:318px;" width="16" height="16" viewBox="0 0 16 16"><defs><linearGradient id="g2" x1="0" y1="0" x2="1" y2="1"><stop offset="0" stop-color="#fff"/><stop offset="1" stop-color="#b9c6da"/></linearGradient></defs><ellipse cx="8" cy="8" rx="6.8" ry="4.6" fill="url(#g2)" stroke="#111" stroke-width="1.2"/><rect x="6.8" y="2.2" width="2.4" height="2.4" fill="#1f6fe0"/><rect x="0.0" y="6.8" width="2.4" height="2.4" fill="#1f6fe0"/><rect x="13.600000000000001" y="6.8" width="2.4" height="2.4" fill="#1f6fe0"/></svg><svg style="left:12px;top:340px;" width="16" height="16" viewBox="0 0 16 16"><defs><linearGradient id="g2" x1="0" y1="0" x2="1" y2="1"><stop offset="0" stop-color="#fff"/><stop offset="1" stop-color="#b9c6da"/></linearGradient></defs><path d="M2 11 Q.4 5 8 3.6 Q15.6 4 14.4 9 Q13 12.6 8 12.6" fill="url(#g2)" stroke="#111" stroke-width="1.2"/><rect x="0.8" y="9.8" width="2.4" height="2.4" fill="#1f6fe0"/><rect x="6.8" y="6.8" width="2.4" height="2.4" fill="#1f6fe0"/></svg><svg style="left:12px;top:362px;" width="16" height="16" viewBox="0 0 16 16"><path d="M5 1 H12 L15 4 V12 H5 Z" fill="#e6edf6" stroke="#4f7fc0" stroke-width="1"/><rect x="1.6" y="5.6" width="7" height="5" fill="#f1de5a" stroke="#1f4f9a" stroke-width="1.1"/><circle cx="9" cy="11.6" r="3.2" fill="#f1de5a" stroke="#1f4f9a" stroke-width="1.1"/><path d="M16 12.6 V16 H12.6 Z" fill="#000"/></svg><svg style="left:12px;top:384px;" width="16" height="16" viewBox="0 0 16 16"><rect x="2" y="2.6" width="8" height="5.6" fill="#f1de5a" stroke="#1f4f9a" stroke-width="1.2"/><circle cx="10.4" cy="10.6" r="3.6" fill="#f1de5a" stroke="#1f4f9a" stroke-width="1.2"/><rect x="0.8" y="1.4000000000000001" width="2.4" height="2.4" fill="#1f6fe0"/></svg><svg style="left:12px;top:406px;" width="16" height="16" viewBox="0 0 16 16"><rect x="6.8" y="6.8" width="2.4" height="2.4" fill="#1f6fe0"/></svg><svg style="left:12px;top:428px;" width="16" height="16" viewBox="0 0 16 16"><rect x="3" y="3" width="10" height="10" fill="#dfe8f4"/><path d="M3 7 L7 3 M3 10 L10 3 M3 13 L13 3 M6 13 L13 6 M9 13 L13 9 M12 13 L13 12" stroke="#333" stroke-width=".7"/><path d="M0 3 H16 M0 13 H16 M3 0 V16 M13 0 V16" stroke="#1f4f9a" stroke-width="1.3"/></svg><svg style="left:12px;top:450px;" width="16" height="16" viewBox="0 0 16 16"><defs><linearGradient id="g3" x1="0" y1="0" x2="1" y2="1"><stop offset="0" stop-color="#222"/><stop offset=".5" stop-color="#666"/><stop offset="1" stop-color="#d8d27a"/></linearGradient></defs><rect x="3" y="3" width="10" height="10" fill="url(#g3)"/><path d="M0 3 H16 M0 13 H16 M3 0 V16 M13 0 V16" stroke="#1a1a1a" stroke-width="1.5"/></svg><svg style="left:12px;top:472px;" width="16" height="16" viewBox="0 0 16 16"><defs><linearGradient id="g2" x1="0" y1="0" x2="1" y2="1"><stop offset="0" stop-color="#fff"/><stop offset="1" stop-color="#b9c6da"/></linearGradient></defs><path d="M1 2.6 H9.6 L15 8 V14 H1 Z" fill="url(#g2)" stroke="#1f4f9a" stroke-width="1.2"/><circle cx="8" cy="8.8" r="2.8" fill="#fff" stroke="#555" stroke-width="1"/></svg><svg style="left:12px;top:494px;" width="16" height="16" viewBox="0 0 16 16"><rect x="1" y="2" width="14" height="12.4" fill="#eef2f8" stroke="#4f7fc0" stroke-width="1"/><rect x="1" y="2" width="14" height="3.4" fill="#4f80d0"/><path d="M1 8.4 H15 M1 11.4 H15 M5.6 5.4 V14.4 M10.4 5.4 V14.4" stroke="#6f94d4" stroke-width="1"/></svg><svg style="left:12px;top:516px;" width="16" height="16" viewBox="0 0 16 16"><path d="M2 15 L7.4 1.6 H8.6 L14 15 M4.4 10 H11.6" stroke="#111" stroke-width="1.5" fill="none"/></svg>
<div style="left:1123px;top:108px;width:17px;height:504px;background:#f0f0f0"></div><div style="left:1128px;top:115px;width:0px;height:0px;border-left:3.5px solid transparent;border-right:3.5px solid transparent;border-bottom:4px solid #444"></div><div style="left:1128px;top:602px;width:0px;height:0px;border-left:3.5px solid transparent;border-right:3.5px solid transparent;border-top:4px solid #444"></div><div style="left:1124px;top:126px;width:14px;height:16px;background:linear-gradient(90deg,#f6f6f6 0,#ececec 45%,#dcdcdc 50%,#d8d8d8 100%);border:1px solid #9a9a9a;border-radius:2px"></div><div style="left:1123px;top:107px;width:17px;height:1px;background:#6a6a6a"></div><div style="left:1140px;top:106px;width:3px;height:522px;background:#fcfcfc"></div><div style="left:1123px;top:612px;width:17px;height:1px;background:#a8a8a8"></div><div style="left:1143px;top:107px;width:25px;height:390px;background:#f0f0f0;border-right:1px solid #a0a0a0;border-bottom:1px solid #a0a0a0;border-left:1px solid #fbfbfb"></div><div style="left:1146px;top:110px;width:20px;height:2px;border-top:1px solid #a0a0a0;border-bottom:1px solid #fff"></div><div style="left:1146px;top:114px;width:20px;height:2px;border-top:1px solid #a0a0a0;border-bottom:1px solid #fff"></div><svg style="left:1147px;top:120px;" width="16" height="16" viewBox="0 0 16 16"><path d="M.6 14.6 H16" stroke="#111" stroke-width="1"/><path d="M12.6 1 L15.6 3.6 L6 14.2 Q4 15.6 2.6 13.6 Q2 12 3 11 Z" fill="#fff" stroke="#2f4f9a" stroke-width=".9"/><path d="M12.6 1 L15.6 3.6 L11.6 8 L8.6 5.4 Z" fill="#f0c21e"/><path d="M4.6 9.4 L7.6 12.4 L6 14.2 Q4 15.6 2.6 13.6 Q2 12 3 11 Z" fill="#e8706a"/><path d="M6.6 7.6 L9.4 10.4 L8.4 11.6 L5.6 8.8 Z" fill="#3ab8b8"/></svg><svg style="left:1147px;top:142px;" width="16" height="16" viewBox="0 0 16 16"><circle cx="4.6" cy="5" r="3.2" fill="#f4f6fa" stroke="#222" stroke-width="1.2"/><circle cx="10.6" cy="11.8" r="3.4" fill="#dfe4ec" stroke="#222" stroke-width="1.2"/><circle cx="8.4" cy="9.6" r="2.6" fill="none" stroke="#444" stroke-width="1"/><path d="M7.6 2 Q12.4 .6 13.4 5.4 L15.6 5 L12.8 8.6 L9.6 5.8 L11.8 5.6 Q11 2.8 7.8 3.6 Z" fill="#173a86"/></svg><svg style="left:1147px;top:164px;" width="16" height="16" viewBox="0 0 16 16"><path d="M8 0 V16" stroke="#2f5f9a" stroke-width="1" /><path d="M6 3 V13.4 H.8 Z" fill="#fff" stroke="#111" stroke-width="1.1"/><path d="M10 3 V13.4 H15.2 Z" fill="#dfe4ec" stroke="#111" stroke-width="1.1"/></svg><svg style="left:1147px;top:186px;" width="16" height="16" viewBox="0 0 16 16"><path d="M1 13.6 Q1 9.6 5 9.6 V5 Q5 1.6 8.6 1.6 Q12.4 1.6 12.4 5 V9.6 H15.4 V14.6 H1 Z" fill="#dfe6f2" stroke="#2f5f9a" stroke-width="1.2"/><path d="M4 12.6 Q4 11.6 7.4 11.6 V5.6 Q7.4 4 8.6 4 Q10 4 10 5.6 V11.6 H13" fill="none" stroke="#2f5f9a" stroke-width="1"/></svg><svg style="left:1147px;top:208px;" width="16" height="16" viewBox="0 0 16 16"><rect x="1" y="1" width="5.8" height="5.8" fill="#fff" stroke="#111" stroke-width="1.2"/><rect x="1" y="9.2" width="5.8" height="5.8" fill="#fff" stroke="#111" stroke-width="1.2"/><rect x="9.2" y="1" width="5.8" height="5.8" fill="#fff" stroke="#111" stroke-width="1.2"/><rect x="9.2" y="9.2" width="5.8" height="5.8" fill="#fff" stroke="#111" stroke-width="1.2"/></svg><svg style="left:1147px;top:230px;" width="16" height="16" viewBox="0 0 16 16"><path d="M8 .4 L11 3.6 H9 V7 H12.4 V5 L15.6 8 L12.4 11 V9 H9 V12.4 H11 L8 15.6 L5 12.4 H7 V9 H3.6 V11 L.4 8 L3.6 5 V7 H7 V3.6 H5 Z" fill="#2f5f9a"/></svg><svg style="left:1147px;top:252px;" width="16" height="16" viewBox="0 0 16 16"><g transform="translate(16 0) scale(-1 1)"><path d="M7.4 3.6 A5.8 5.8 0 1 0 13.8 9" fill="none" stroke="#2f5f9a" stroke-width="2.2"/><path d="M6.4 .2 L11.4 3.4 L6.4 6.8 Z" fill="#2f5f9a"/></g></svg><svg style="left:1147px;top:274px;" width="16" height="16" viewBox="0 0 16 16"><rect x="1" y="1" width="14" height="14" fill="#f4f6fa" stroke="#2f5f9a" stroke-width="1.1"/><rect x="1" y="7" width="8" height="8" fill="#dfe6f2" stroke="#222" stroke-width="1" stroke-dasharray="1.2 1.2"/></svg><svg style="left:1147px;top:296px;" width="16" height="16" viewBox="0 0 16 16"><path d="M1 1 H6.6 V15 H1 Z" fill="#fff" stroke="#111" stroke-width="1.1"/><path d="M6.6 1 L15 15 H6.6 Z" fill="#cdd8e8" stroke="#2f5f9a" stroke-width="1.1"/><path d="M4 3 V13" stroke="#111" stroke-width="1" stroke-dasharray="1.4 1.4"/></svg><svg style="left:1147px;top:318px;" width="16" height="16" viewBox="0 0 16 16"><path d="M0 9.6 H6" stroke="#2f5f9a" stroke-width="1.2"/><path d="M9.6 9.6 H16" stroke="#2f5f9a" stroke-width="1.2" stroke-dasharray="2 1.4"/><path d="M5 15.6 L11.6 1" stroke="#2f5f9a" stroke-width="1.2"/></svg><svg style="left:1147px;top:340px;" width="16" height="16" viewBox="0 0 16 16"><path d="M0 9.6 H4.6" stroke="#111" stroke-width="1.2"/><path d="M5.6 9.6 H11" stroke="#2f5f9a" stroke-width="1.2" stroke-dasharray="2 1.4"/><path d="M10 15.6 L16 2" stroke="#2f5f9a" stroke-width="1.3"/></svg><svg style="left:1147px;top:362px;" width="16" height="16" viewBox="0 0 16 16"><defs><linearGradient id="g2" x1="0" y1="0" x2="1" y2="1"><stop offset="0" stop-color="#fff"/><stop offset="1" stop-color="#b9c6da"/></linearGradient></defs><path d="M9 3 H1 V14 H15 V3 H11" fill="url(#g2)" stroke="#111" stroke-width="1.2"/><rect x="8.8" y="1.8" width="2.4" height="2.4" fill="#1f6fe0"/></svg><svg style="left:1147px;top:384px;" width="16" height="16" viewBox="0 0 16 16"><defs><linearGradient id="g2" x1="0" y1="0" x2="1" y2="1"><stop offset="0" stop-color="#fff"/><stop offset="1" stop-color="#b9c6da"/></linearGradient></defs><path d="M5 3 H1 V14 H15 V3 H11" fill="url(#g2)" stroke="#111" stroke-width="1.2"/><rect x="3.8" y="1.8" width="2.4" height="2.4" fill="#1f6fe0"/><rect x="9.8" y="1.8" width="2.4" height="2.4" fill="#1f6fe0"/></svg><svg style="left:1147px;top:406px;" width="16" height="16" viewBox="0 0 16 16"><path d="M0 8 H4 M12 8 H16" stroke="#111" stroke-width="1.4"/><path d="M3.6 5 L8 8 L3.6 11 Z M12.4 5 L8 8 L12.4 11 Z" fill="#173a86"/></svg><svg style="left:1147px;top:428px;" width="16" height="16" viewBox="0 0 16 16"><path d="M2 1.6 H14 M2 1.6 V6" stroke="#555" stroke-width="1" stroke-dasharray="1.2 1.2"/><path d="M14.6 1.6 H8 L2 8 V15.6" stroke="#111" stroke-width="1.2" fill="none"/><path d="M8 1.6 L2 8" stroke="#2f5f9a" stroke-width="1.6"/></svg><svg style="left:1147px;top:450px;" width="16" height="16" viewBox="0 0 16 16"><path d="M2 1.6 H14 M2 1.6 V6" stroke="#555" stroke-width="1" stroke-dasharray="1.2 1.2"/><path d="M14.6 1.6 H10 Q2 2 2 10 V15.6" stroke="#111" stroke-width="1.2" fill="none"/><path d="M10 1.6 Q2 2 2 10" stroke="#2f6fd0" stroke-width="1.8" fill="none"/></svg><svg style="left:1147px;top:472px;" width="16" height="16" viewBox="0 0 16 16"><path d="M1 15 L7 8 L9.6 10.6 Z" fill="#c8241c" stroke="#6a1410" stroke-width=".6"/><path d="M6 6 L9 4 L8.6 7 L12 6.4 L10 9 L12.6 11 L9 11 Z" fill="#f4b41e" stroke="#c8641c" stroke-width=".7"/><path d="M10 3 L14 .6 M12 5 L15.6 4 M12.6 2.6 L15 2" stroke="#8f9ab8" stroke-width="1"/><circle cx="13.6" cy="7.6" r="1" fill="#8f9ab8"/></svg><div style="left:1143px;top:497px;width:25px;height:106px;background:#f0f0f0;border-right:1px solid #a0a0a0;border-bottom:1px solid #a0a0a0;border-left:1px solid #fbfbfb;border-top:1px solid #fbfbfb"></div><div style="left:1146px;top:501px;width:20px;height:2px;border-top:1px solid #a0a0a0;border-bottom:1px solid #fff"></div><div style="left:1146px;top:505px;width:20px;height:2px;border-top:1px solid #a0a0a0;border-bottom:1px solid #fff"></div><svg style="left:1147px;top:512px;" width="16" height="16" viewBox="0 0 16 16"><rect x="0.6" y="0.6" width="8" height="6.4" fill="#e4edf4" stroke="#3f6f9f" stroke-width="1"/><rect x="7.6" y="9" width="8" height="6.4" fill="#e4edf4" stroke="#3f6f9f" stroke-width="1"/><rect x="3.6" y="3.4" width="9.4" height="9.4" fill="#4f7fb4" stroke="#3f6f9f" stroke-width="1"/></svg><svg style="left:1147px;top:534px;" width="16" height="16" viewBox="0 0 16 16"><rect x="3.6" y="3.4" width="9.4" height="9.4" fill="#e4edf4" stroke="#3f6f9f" stroke-width="1"/><rect x="0.6" y="0.6" width="8" height="6.4" fill="#4f7fb4" stroke="#3f6f9f" stroke-width="1"/><rect x="7.6" y="9" width="8" height="6.4" fill="#e4edf4" stroke="#3f6f9f" stroke-width="1"/></svg><svg style="left:1147px;top:556px;" width="16" height="16" viewBox="0 0 16 16"><rect x="5" y="5.6" width="10.4" height="9.6" fill="#e4edf4" stroke="#3f6f9f" stroke-width="1"/><rect x="0.6" y="0.8" width="11" height="10" fill="#4f7fb4" stroke="#3f6f9f" stroke-width="1"/></svg><svg style="left:1147px;top:578px;" width="16" height="16" viewBox="0 0 16 16"><rect x="0.6" y="0.8" width="11" height="10" fill="#4f7fb4" stroke="#3f6f9f" stroke-width="1"/><rect x="5" y="5.6" width="10.4" height="9.6" fill="#e4edf4" stroke="#3f6f9f" stroke-width="1"/></svg>
<svg style="left:480px;top:380px;" width="130" height="110" viewBox="0 0 130 110"><g stroke="#fff" stroke-width="1" fill="none"><path d="M63.5 54 V102"/><path d="M63.5 102 L24 80"/><path d="M63.5 102 L103 80"/><path d="M56.5 103 L63.5 99.4 L70.5 103 L63.5 107 Z M56.5 103 H70.5 M60 101.2 L67 104.8 M67 101.2 L60 104.8"/><path d="M20 77.4 L31 78.6 L27 86 Z M24.6 78 Q29.6 79 28 84.6 M24 80 L27.6 85"/><path d="M107 77.4 L96 78.6 L100 86 Z M102.4 78 Q97.4 79 99 84.6 M103 80 L99.4 85"/><path d="M58.6 33.6 H68.6 L58.6 45.6 H68.6"/><path d="M6 64.6 L10.6 70 L15.4 64.6 M10.6 70 V77"/><path d="M113 65.6 L122.6 77 M122.6 65.6 L113 77"/></g></svg>
<div style="left:36px;top:612px;width:1087px;height:17px;background:#f0f0f0"></div><div style="left:36px;top:612px;width:14px;height:16px;background:#f0f0f0;border:1px solid #b8b8b8;border-top:0;border-left-color:#fdfdfd"></div><div style="left:50px;top:612px;width:14px;height:16px;background:#f0f0f0;border:1px solid #b8b8b8;border-top:0;border-left-color:#fdfdfd"></div><div style="left:64px;top:612px;width:14px;height:16px;background:#f0f0f0;border:1px solid #b8b8b8;border-top:0;border-left-color:#fdfdfd"></div><div style="left:78px;top:612px;width:14px;height:16px;background:#f0f0f0;border:1px solid #b8b8b8;border-top:0;border-left-color:#fdfdfd"></div><svg style="left:36px;top:612px;" width="56" height="16" viewBox="0 0 56 16"><g fill="#6a6a6a"><rect x="4" y="3" width="1.4" height="9"/><path d="M10.6 3 V12 L5.8 7.5 Z"/><path d="M23.6 3 V12 L18.6 7.5 Z"/><path d="M32.6 3 V12 L37.6 7.5 Z"/><path d="M45.6 3 V12 L50.4 7.5 Z"/><rect x="50.8" y="3" width="1.4" height="9"/></g></svg><svg style="left:90px;top:612px;" width="150" height="17" viewBox="0 0 150 17"><path d="M2.6 0 H48.4 L42.8 14.2 H7.6 Z" fill="#000"/><path d="M93.4 .6 L89.6 14.2 M141 .6 L135.4 14.2" stroke="#3a3a3a" stroke-width="1" fill="none"/><path d="M43.6 14.6 H89.6 M91 14.6 H135.4" stroke="#8a8a8a" stroke-width="1"/></svg><span style="left:103px;top:612px;color:#fff;font-size:12px;line-height:15px">模型</span><span style="left:143px;top:612px;font-size:12px;line-height:15px">布局1</span><span style="left:189px;top:612px;font-size:12px;line-height:15px">布局2</span><div style="left:753px;top:613px;width:4px;height:15px;background:#fff;border:1px solid #8a8a8a;border-right:0;border-radius:2px 0 0 2px"></div><div style="left:757px;top:612px;width:366px;height:17px;background:#efefef"></div><div style="left:764px;top:617px;width:0px;height:0px;border-top:3.5px solid transparent;border-bottom:3.5px solid transparent;border-right:4px solid #444"></div><div style="left:1112px;top:617px;width:0px;height:0px;border-top:3.5px solid transparent;border-bottom:3.5px solid transparent;border-left:4px solid #444"></div><div style="left:777px;top:613px;width:15px;height:15px;background:linear-gradient(#f6f6f6 0,#ececec 45%,#dcdcdc 50%,#d8d8d8 100%);border:1px solid #9a9a9a;border-radius:2px"></div>
<div style="left:21px;top:104px;width:176px;height:114px;background:#fff;border:1px solid #9a9aa8;border-left-color:#bcbcc6;border-right-color:#d0d0d6;border-bottom-color:#c0c0c8"></div><div style="left:179px;top:105px;width:17px;height:112px;background:#f0f0f0"></div><div style="left:184px;top:112px;width:0px;height:0px;border-left:3.5px solid transparent;border-right:3.5px solid transparent;border-bottom:4px solid #9a9a9a"></div><div style="left:184px;top:207px;width:0px;height:0px;border-left:3.5px solid transparent;border-right:3.5px solid transparent;border-top:4px solid #9a9a9a"></div><div style="left:22px;top:137px;width:157px;height:16px;background:#3399ff"></div><span class="cj" style="left:28px;top:104px;">二维草图与注释</span><span class="cj" style="left:28px;top:120px;">三维建模</span><span class="ss" style="left:28px;top:137px;color:#fff">AutoCAD 经典</span><div style="left:28px;top:160px;width:148px;height:1px;background:#000"></div><span class="cj" style="left:28px;top:168px;">将当前工作空间另存为<b class="dt">...</b></span><span class="cj" style="left:28px;top:184px;">工作空间设置<b class="dt">...</b></span><span class="cj" style="left:28px;top:200px;">自定义<b class="dt">...</b></span>
<div style="left:22px;top:117px;width:105px;height:22px;border:3px solid #f8383c"></div><svg style="left:80px;top:140px;" width="140" height="185" viewBox="0 0 140 185"><path d="M7.2 5.2 L23 14.4 L19.4 16.8 L133 178 L13.6 20.2 L9.4 22 Z" fill="#f8383c" stroke="#f8383c" stroke-width=".8" stroke-linejoin="round"/></svg>
<div style="left:8px;top:629px;width:1160px;height:63px;background:#f0f0f0"></div><div style="left:8px;top:628px;width:1160px;height:3px;background:#fcfcfc"></div><div style="left:8px;top:633px;width:1160px;height:1px;background:#9a9a9a"></div><div style="left:8px;top:634px;width:1160px;height:1px;background:#5a5a5a"></div><div class="grip" style="left:14px;top:643px;width:3px;height:41px;"></div><div class="grip" style="left:18px;top:643px;width:3px;height:41px;"></div><div style="left:25px;top:644px;width:1136px;height:44px;background:#fff;border:1px solid #b4b4b4;border-top:2px solid #7a7a7a;border-left:2px solid #7a7a7a"></div><div style="left:27px;top:668px;width:1117px;height:1px;background:#a8a8a8"></div><span class="cm" style="left:27px;top:645px;">命令<b class="hw">: *</b>取消<b class="hw">*</b></span><span class="cm" style="left:27px;top:670px;">命令<b class="hw">:</b></span><div style="left:1144px;top:646px;width:16px;height:23px;background:#f0f0f0"></div><div style="left:1148px;top:651px;width:0px;height:0px;border-left:3.5px solid transparent;border-right:3.5px solid transparent;border-bottom:4px solid #444"></div><div style="left:1148px;top:662px;width:0px;height:0px;border-left:3.5px solid transparent;border-right:3.5px solid transparent;border-top:4px solid #444"></div><div style="left:1075px;top:670px;width:85px;height:18px;background:#efefef"></div><div style="left:1083px;top:675px;width:0px;height:0px;border-top:3.5px solid transparent;border-bottom:3.5px solid transparent;border-right:4px solid #444"></div><div style="left:1131px;top:675px;width:0px;height:0px;border-top:3.5px solid transparent;border-bottom:3.5px solid transparent;border-left:4px solid #444"></div><div style="left:1094px;top:671px;width:15px;height:15px;background:linear-gradient(#f6f6f6 0,#ececec 45%,#dcdcdc 50%,#d8d8d8 100%);border:1px solid #9a9a9a;border-radius:2px"></div><div style="left:8px;top:689px;width:1160px;height:1px;background:#a8a8a8"></div><div style="left:8px;top:690px;width:1160px;height:1px;background:#fcfcfc"></div><div style="left:8px;top:691px;width:1160px;height:1px;background:#8c8c8c"></div>
<div style="left:8px;top:692px;width:1160px;height:21px;background:#f0eeee"></div><div style="left:8px;top:692px;width:1160px;height:1px;background:#fff"></div><div style="left:13px;top:694px;width:186px;height:18px;background:#efeded;border:1px solid #8a8a8a;border-right-color:#fff;border-bottom-color:#a4a4a4"></div><span style="left:15px;top:696px;white-space:pre;font-size:12px"><b class="dg">253</b><b class="pn">.</b><b class="dg">2527</b><b class="pn">,  </b><b class="dg">841</b><b class="pn">.</b><b class="dg">2187</b><b class="pn"> , </b><b class="dg">0</b><b class="pn">.</b><b class="dg">0000</b></span><div style="left:204px;top:695px;width:27px;height:18px;background:#efeded;border-top:1px solid #fff;border-left:1px solid #fff;border-right:1px solid #8a8a8a;border-bottom:1px solid #8a8a8a"></div><span style="left:205px;top:698.5px;font-size:12.4px;line-height:15px">捕捉</span><div style="left:236px;top:695px;width:27px;height:18px;background:#efeded;border-top:1px solid #fff;border-left:1px solid #fff;border-right:1px solid #8a8a8a;border-bottom:1px solid #8a8a8a"></div><span style="left:237px;top:698.5px;font-size:12.4px;line-height:15px">栅格</span><div style="left:268px;top:695px;width:27px;height:18px;background:#efeded;border-top:1px solid #fff;border-left:1px solid #fff;border-right:1px solid #8a8a8a;border-bottom:1px solid #8a8a8a"></div><span style="left:269px;top:698.5px;font-size:12.4px;line-height:15px">正交</span><div style="left:299px;top:695px;width:28px;height:18px;background:#f7f5f5;border-top:2px solid #1a1a1a;border-left:2px solid #1a1a1a;border-right:1px solid #fff;border-bottom:0"></div><span style="left:301px;top:698.5px;font-size:12.4px;line-height:15px">极轴</span><div style="left:331px;top:695px;width:52px;height:18px;background:#f7f5f5;border-top:2px solid #1a1a1a;border-left:2px solid #1a1a1a;border-right:1px solid #fff;border-bottom:0"></div><span style="left:333px;top:698.5px;font-size:12.4px;line-height:15px">对象捕捉</span><div style="left:387px;top:695px;width:52px;height:18px;background:#f7f5f5;border-top:2px solid #1a1a1a;border-left:2px solid #1a1a1a;border-right:1px solid #fff;border-bottom:0"></div><span style="left:389px;top:698.5px;font-size:12.4px;line-height:15px">对象追踪</span><div style="left:443px;top:695px;width:28px;height:18px;background:#f7f5f5;border-top:2px solid #1a1a1a;border-left:2px solid #1a1a1a;border-right:1px solid #fff"></div><span class="ss" style="left:446.5px;top:699.5px;line-height:15px;text-shadow:.5px 0 0 #000">DUCS</span><div style="left:475px;top:695px;width:22px;height:18px;background:#f7f5f5;border-top:2px solid #1a1a1a;border-left:2px solid #1a1a1a;border-right:1px solid #fff"></div><span class="ss" style="left:478.5px;top:699.5px;line-height:15px;text-shadow:.5px 0 0 #000">DYN</span><div style="left:502px;top:695px;width:26px;height:18px;background:#efeded;border-top:1px solid #fff;border-left:1px solid #fff;border-right:1px solid #8a8a8a;border-bottom:1px solid #8a8a8a"></div><span style="left:503px;top:698.5px;font-size:12.4px;line-height:15px">线宽</span><div style="left:532px;top:695px;width:29px;height:18px;background:#f7f5f5;border-top:2px solid #1a1a1a;border-left:2px solid #1a1a1a;border-right:1px solid #fff;border-bottom:0"></div><span style="left:534px;top:698.5px;font-size:12.4px;line-height:15px">模型</span><span style="left:937px;top:696px;font-size:12.6px">注释比例:</span><span class="ss" style="left:999px;top:696px;">1:1</span><div style="left:1021px;top:701px;width:0px;height:0px;border-left:4px solid transparent;border-right:4px solid transparent;border-top:4px solid #000"></div><svg style="left:1041px;top:695px;" width="16" height="16" viewBox="0 0 16 16"><path d="M1 15 L6 6 L11 15 Z M3.6 15 L6 10.6 L8.4 15" fill="none" stroke="#2f5fae" stroke-width="1.3"/><path d="M2 12 H10" stroke="#2f5fae" stroke-width="1"/><circle cx="11" cy="4.6" r="3.6" fill="#fdf08a" stroke="#d8c23a" stroke-width=".8"/><rect x="9.6" y="8" width="2.8" height="2" fill="#b8b8b8"/></svg><svg style="left:1065px;top:695px;" width="16" height="16" viewBox="0 0 16 16"><path d="M1 15 L6 6 L11 15 Z M3.6 15 L6 10.6 L8.4 15" fill="none" stroke="#b4b4b4" stroke-width="1.3"/><path d="M2 12 H10" stroke="#b4b4b4" stroke-width="1"/><path d="M15 1 L8 7 L10 10 L13 9.4 L15.6 4 Z" fill="#c8c8c8" stroke="#9a9a9a" stroke-width=".7"/></svg><div style="left:1089px;top:694px;width:24px;height:18px;background:#f3f1f1;border-top:1px solid #8a8a8a;border-left:1px solid #8a8a8a;border-right:1px solid #fff;border-bottom:1px solid #fff"></div><svg style="left:1093px;top:696px;" width="16" height="16" viewBox="0 0 16 16"><defs><linearGradient id="gl" x1="0" y1="0" x2="1" y2="0"><stop offset="0" stop-color="#a87c00"/><stop offset=".45" stop-color="#ffe85a"/><stop offset="1" stop-color="#9a7000"/></linearGradient></defs><path d="M8.6 7 V4.4 Q8.6 1 11.6 1 Q14.6 1 14.6 4.4 V6.4" fill="none" stroke="#3a2c00" stroke-width="2.6"/><path d="M8.6 7 V4.4 Q8.6 1 11.6 1 Q14.6 1 14.6 4.4 V6.4" fill="none" stroke="#e8b81e" stroke-width="1.4"/><rect x="1" y="6" width="12" height="9.6" rx="1.4" fill="#2a2000"/><path d="M1.6 8 H12.4 M1.6 10.2 H12.4 M1.6 12.4 H12.4 M1.6 14.4 H12.4" stroke="url(#gl)" stroke-width="1.5"/></svg><div style="left:1119px;top:705px;width:0px;height:0px;border-left:4px solid transparent;border-right:4px solid transparent;border-top:4px solid #000"></div><div style="left:1135px;top:694px;width:17px;height:17px;background:linear-gradient(135deg,#eaf2fb,#a9c4e6);border:2px solid #1f4f9a;box-shadow:inset 0 0 0 1px #fff"></div><svg style="left:1157px;top:701px;" width="11" height="11" viewBox="0 0 11 11"><g fill="#c9c9c9"><rect x="8" y="0" width="2" height="2"/><rect x="4" y="4" width="2" height="2"/><rect x="8" y="4" width="2" height="2"/><rect x="0" y="8" width="2" height="2"/><rect x="4" y="8" width="2" height="2"/><rect x="8" y="8" width="2" height="2"/></g></svg>
</div>
</body>
</html>
